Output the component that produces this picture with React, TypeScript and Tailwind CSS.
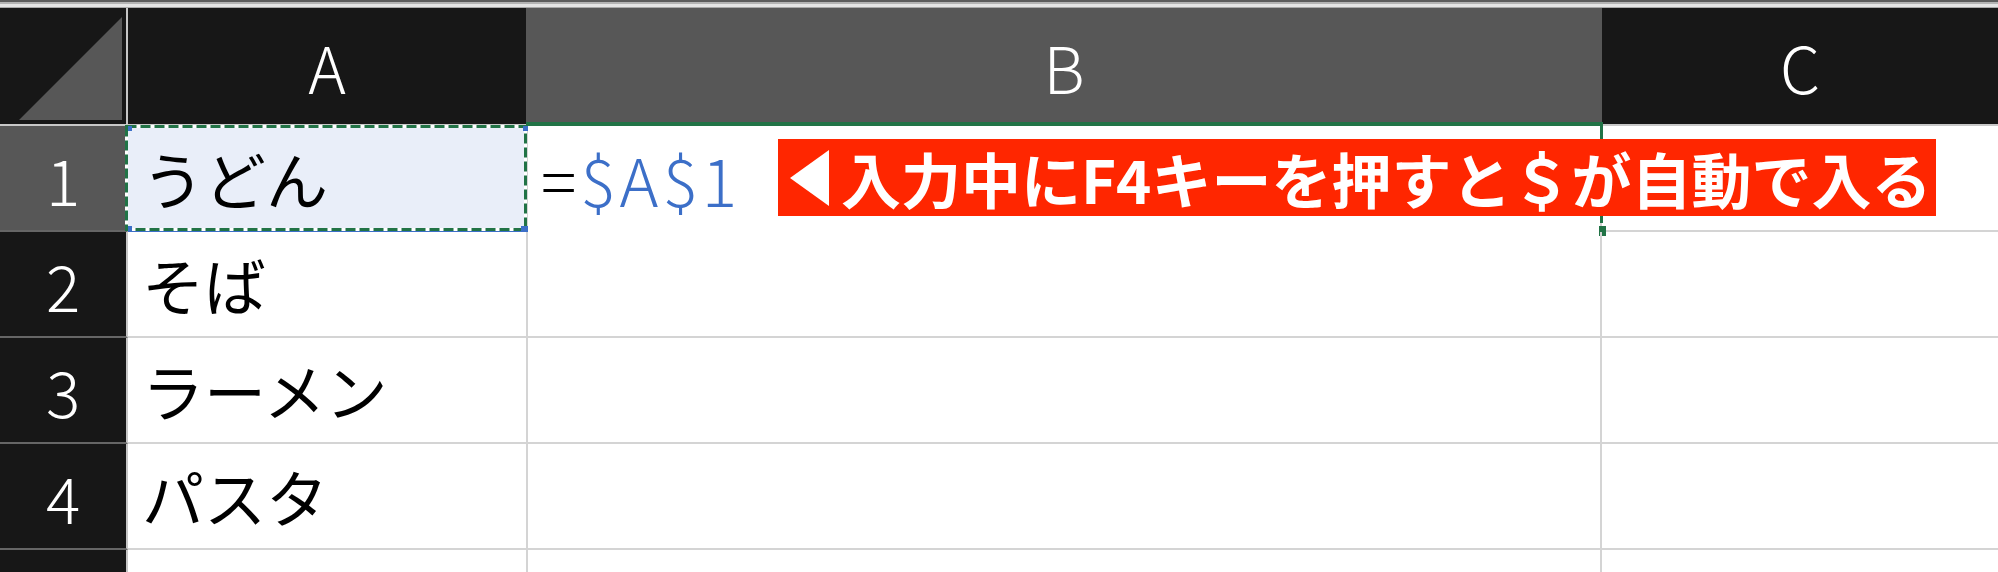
const jp = "font-['Noto_Sans_CJK_JP',sans-serif]";

const rows = [
  { n: "1", text: "うどん" },
  { n: "2", text: "そば" },
  { n: "3", text: "ラーメン" },
  { n: "4", text: "パスタ" },
  { n: "", text: "" },
];

export default function App() {
  return (
    <div className={`relative w-[1998px] h-[572px] overflow-hidden bg-white font-light ${jp}`}>
      {/* window edge */}
      <div className="flex flex-col h-[8px]">
        <div className="h-[2px] bg-[#5c5c5c]" />
        <div className="h-[2px] bg-[#b4b4b4]" />
        <div className="h-[3px] bg-[#e4e4e4]" />
        <div className="h-[1px] bg-[#a8a8a8]" />
      </div>

      {/* column headers */}
      <div className="flex h-[118px] border-b-2 border-[#c8c8c8] text-white text-[64px] leading-none">
        <div className="w-[128px] shrink-0 border-r-2 border-[#c6c6c6] bg-[#171717] flex items-end justify-end pr-[4px] pb-[4px]">
          <svg width="103" height="103" viewBox="0 0 103 103">
            <polygon points="0,103 103,103 103,0" fill="#575757" />
          </svg>
        </div>
        <div className="w-[398px] shrink-0 bg-[#171717] flex items-center justify-center">A</div>
        <div className="w-[1076px] shrink-0 bg-[#575757] flex items-center justify-center">B</div>
        <div className="flex-1 bg-[#171717] flex items-center justify-center">C</div>
      </div>

      {rows.map((r, i) => (
        <Row key={i} n={r.n} text={r.text} first={i === 0} />
      ))}
    </div>
  );
}

function Row({ n, text, first }: { n: string; text: string; first: boolean }) {
  return (
    <div className="relative flex h-[106px] shrink-0">
      <div
        className={`w-[128px] shrink-0 border-r-2 border-r-[#c6c6c6] border-b-2 border-b-[#666666] flex items-center justify-center text-white text-[64px] leading-none ${
          first ? "bg-[#575757]" : "bg-[#171717]"
        }`}
      >
        {n}
      </div>
      <div
        className={`w-[400px] shrink-0 border-r-2 border-b-2 border-[#d4d4d4] flex items-center pl-[14px] text-black font-normal text-[62px] leading-none ${
          first ? "bg-[#e9eef9]" : "bg-white"
        }`}
      >
        {text}
      </div>
      <div
        className={`w-[1074px] shrink-0 border-r-2 border-r-[#d4d4d4] border-b-2 flex items-center pl-[13px] text-[66px] tracking-[4px] leading-none ${
          first ? "border-b-white" : "border-b-[#d4d4d4]"
        }`}
      >
        {first && (
          <>
            <span className="text-black">=</span>
            <span className="text-[#3c6fc8]">$A$1</span>
          </>
        )}
      </div>
      <div className="flex-1 border-b-2 border-[#d4d4d4]" />

      {first && <SelectionOverlay />}
    </div>
  );
}

function SelectionOverlay() {
  return (
    <>
      {/* referenced cell A1 */}
      <svg className="absolute left-[125px] top-[-1px]" width="402" height="106" viewBox="0 0 402 106">
        <rect x="1.5" y="1.5" width="399" height="103" fill="none" stroke="#ffffff" strokeWidth="3" />
        <rect x="1.5" y="1.5" width="399" height="103" fill="none" stroke="#217346" strokeWidth="3" strokeDasharray="10 4" />
      </svg>
      <div className="absolute left-[131px] top-[105px] w-[392px] h-[2px] bg-[#3c6fc8]" />
      <div className="absolute left-[128px] top-0 w-[4px] h-[5px] bg-[#3c6fc8]" />
      <div className="absolute left-[523px] top-0 w-[5px] h-[5px] bg-[#3c6fc8]" />
      <div className="absolute left-[128px] top-[100px] w-[4px] h-[8px] bg-[#3c6fc8]" />
      <div className="absolute left-[521px] top-[100px] w-[7px] h-[10px] bg-[#3c6fc8]" />

      {/* active cell B1 */}
      <div className="absolute left-[526px] top-[-4px] w-[1077px] h-[4px] bg-[#217346]" />
      <div className="absolute left-[1600px] top-[-4px] w-[3px] h-[101px] bg-[#217346]" />
      <div className="absolute left-[1599px] top-[100px] w-[7px] h-[10px] bg-[#217346]" />

      {/* annotation */}
      <div className="absolute left-[778px] top-[13px] h-[77px] flex items-center gap-[12px] pl-[12px] pr-[4px] bg-[#ff2600] text-white font-bold text-[60px] leading-none whitespace-nowrap">
        <svg width="39" height="56" viewBox="0 0 39 56" className="shrink-0">
          <polygon points="39,0 39,56 0,28" fill="#ffffff" />
        </svg>
        <span>入力中にF4キーを押すと＄が自動で入る</span>
      </div>
    </>
  );
}
